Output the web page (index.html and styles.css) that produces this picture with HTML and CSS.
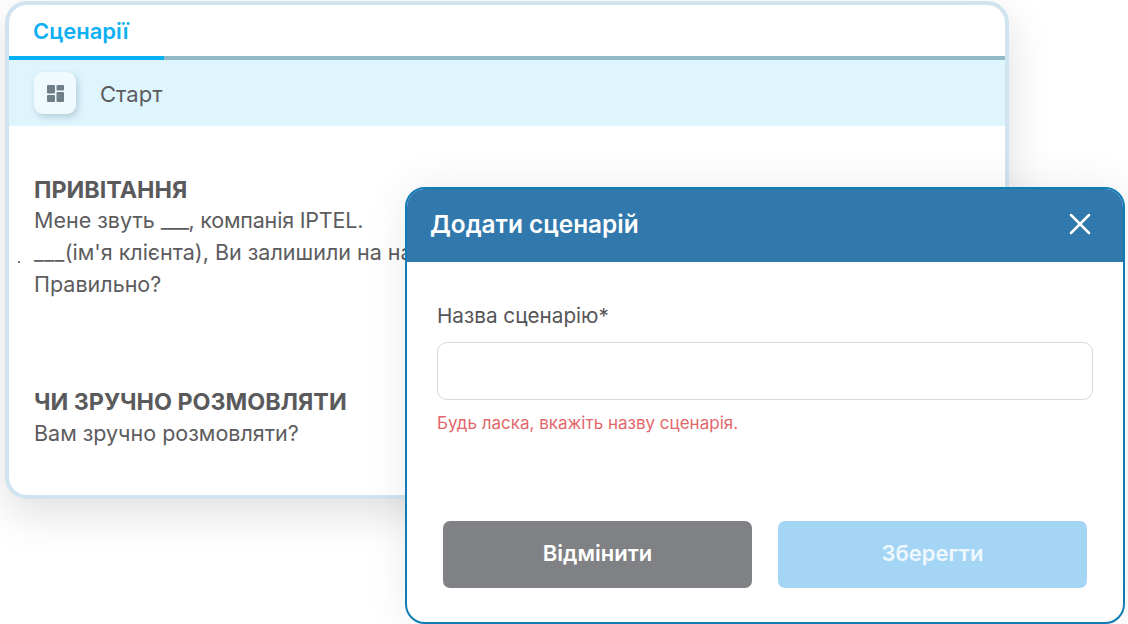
FILE: index.html
```html
<!DOCTYPE html>
<html lang="uk">
<head>
<meta charset="utf-8">
<title>Сценарії</title>
<link rel="stylesheet" href="styles.css">
</head>
<body>
<main class="stage">
  <section class="card">
    <nav class="tabs">
      <div class="tab">Сценарії</div>
    </nav>
    <div class="start-row">
      <button class="icon-btn" type="button" aria-label="Меню">
        <svg width="17" height="17" viewBox="0 0 17 17" fill="#6f7f88">
          <rect x="0" y="0" width="8" height="8.5" rx="1"/>
          <rect x="9.5" y="0" width="7.5" height="5.5" rx="1"/>
          <rect x="0" y="10" width="8" height="7" rx="1"/>
          <rect x="9.5" y="7" width="7.5" height="10" rx="1"/>
        </svg>
      </button>
      <span class="start-label">Старт</span>
    </div>
    <div class="script">
      <article class="block">
        <h3 class="block-title">ПРИВІТАННЯ</h3>
        <p class="line">Мене звуть <span class="blank">___</span><span class="tight">, компанія IPTEL.</span></p>
        <p class="line"><span class="blank-wide">___</span>(ім'я клієнта), Ви залишили на нашому сайті заявку.</p>
        <p class="line">Правильно?</p>
      </article>
      <article class="block">
        <h3 class="block-title">ЧИ ЗРУЧНО РОЗМОВЛЯТИ</h3>
        <p class="line">Вам зручно розмовляти?</p>
      </article>
    </div>
  </section>
  <span class="speck"></span>

  <section class="modal">
    <header class="modal-head">
      <h2 class="modal-title">Додати сценарій</h2>
      <svg class="close" width="22" height="22" viewBox="0 0 22 22" fill="none" stroke="#fff" stroke-width="2.5" stroke-linecap="round">
        <path d="M2 2 L20 20 M20 2 L2 20"/>
      </svg>
    </header>
    <div class="modal-body">
      <label class="field-label" for="name">Назва сценарію*</label>
      <input class="field-input" id="name" type="text">
      <p class="field-error">Будь ласка, вкажіть назву сценарія.</p>
      <div class="actions">
        <button class="btn btn-cancel" type="button">Відмінити</button>
        <button class="btn btn-save" type="button">Зберегти</button>
      </div>
    </div>
  </section>
</main>
</body>
</html>
```
FILE: styles.css
```css
* { box-sizing: border-box; }
html, body { margin: 0; height: 100%; overflow: hidden; background: #fff; }
body { font-family: Inter, "Noto Sans", sans-serif; color: #5c5c5e; }

.stage { position: relative; width: 1128px; height: 624px; padding: 1px 0 0 5px; }

.card {
  width: 1004px;
  height: 498px;
  background: #fff;
  border: 4px solid #cfe4ee;
  border-radius: 22px;
  overflow: hidden;
  box-shadow: 0 14px 44px rgba(0, 0, 0, 0.13);
}

.speck {
  position: absolute;
  left: 18px;
  top: 261px;
  width: 2px;
  height: 2px;
  background: #77787a;
}

.tabs { height: 55px; border-bottom: 4px solid #93b9c9; }
.tab {
  width: 155px;
  height: 55px;
  padding: 11px 0 0 24px;
  border-bottom: 4px solid #06b0f4;
  font-size: 22px;
  line-height: 30px;
  font-weight: 600;
  color: #0db0f2;
}

.start-row {
  height: 66px;
  background: #dff5fe;
  display: flex;
  align-items: center;
  padding-left: 25px;
  gap: 24px;
}
.icon-btn {
  width: 42px;
  height: 42px;
  border: 0;
  padding: 0;
  border-radius: 9px;
  background: #eff9fe;
  box-shadow: 2px 3px 7px rgba(70, 100, 120, 0.28);
  display: flex;
  align-items: center;
  justify-content: center;
}
.start-label { font-size: 22px; line-height: 28px; padding-top: 2px; color: #5c5c5e; }

.script { padding: 51px 0 0 25px; }
.block { height: 212px; }
.block-title { margin: 0 0 1px; font-size: 23.3px; line-height: 26px; font-weight: 700; color: #5a5a5c; }
.block + .block .block-title { margin-bottom: 2px; }
.line { margin: 0; font-size: 21.5px; line-height: 32px; color: #5c5c5e; white-space: nowrap; }
.blank { letter-spacing: -0.6px; }
.blank-wide { letter-spacing: 0.4px; }
.tight { letter-spacing: -0.2px; }

.modal {
  position: absolute;
  left: 405px;
  top: 187px;
  width: 720px;
  height: 437px;
  background: #fff;
  border: 2px solid #0f7cb6;
  border-radius: 20px;
  overflow: hidden;
  box-shadow: 0 0 44px rgba(0, 0, 0, 0.08);
}
.modal-head {
  height: 73px;
  background: #3179ad;
  display: flex;
  align-items: center;
  justify-content: space-between;
  padding: 0 32px 3px 23px;
}
.modal-title { margin: 0; font-size: 24.4px; font-weight: 600; color: #fff; }

.modal-body { padding: 40px 30px 0; }
.field-label { display: block; font-size: 20.7px; line-height: 28px; font-weight: 400; color: #555557; }
.field-input {
  display: block;
  width: 656px;
  height: 58px;
  margin-top: 12px;
  border: 1.5px solid #d8d9da;
  border-radius: 10px;
  background: #fff;
}
.field-error { margin: 12px 0 0; font-size: 17px; line-height: 22px; color: #e2676b; }

.actions { display: flex; margin-top: 87px; padding: 0 6px; justify-content: space-between; }
.btn {
  width: 309px;
  height: 67px;
  border: 0;
  border-radius: 7px;
  padding: 0 0 3px;
  font-family: inherit;
  font-size: 22px;
  font-weight: 600;
  color: #fff;
}
.btn-cancel { background: #808184; }
.btn-save { background: #a5d5f4; color: #eef8fe; }
```
